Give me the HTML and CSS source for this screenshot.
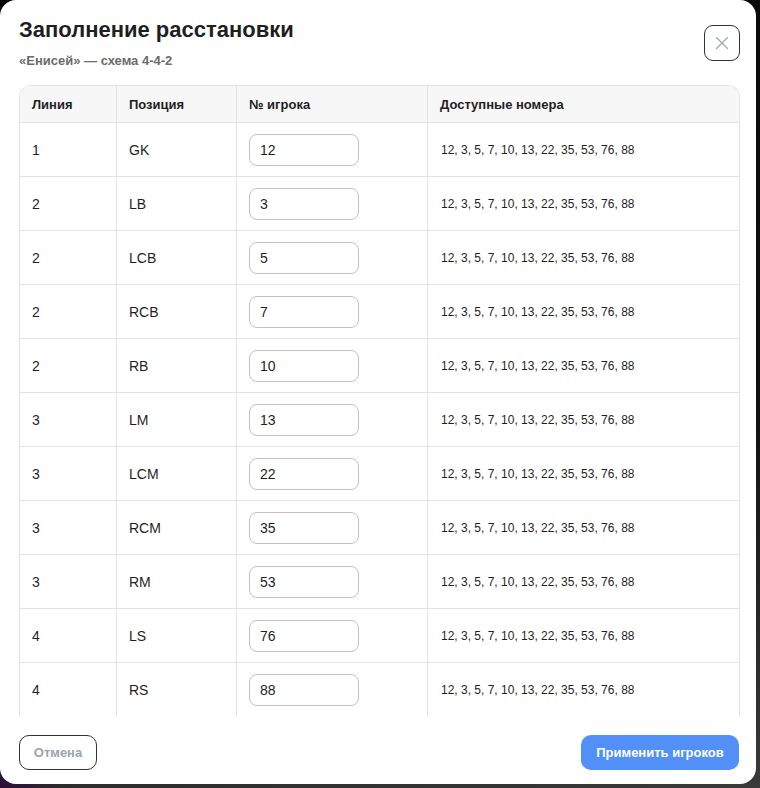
FILE: index.html
```html
<!DOCTYPE html>
<html lang="ru">
<head>
  <meta charset="UTF-8">
  <meta name="viewport" content="width=device-width, initial-scale=1.0">
  <title>Заполнение расстановки</title>
  <link rel="stylesheet" href="styles.css">
</head>
<body>

  <div class="modal">
    <header class="modal__head">
      <div>
        <h2 class="modal__title">Заполнение расстановки</h2>
        <p class="modal__sub">«Енисей» — схема 4-4-2</p>
      </div>
      <button class="modal__close" aria-label="Закрыть">
        <svg width="14" height="14" viewBox="0 0 14 14"><path d="M1.5 1.5l11 11M12.5 1.5l-11 11" stroke="#a3a9b3" stroke-width="1.4" stroke-linecap="round"/></svg>
      </button>
    </header>

    <div class="lineup">
      <table class="lineup__table">
        <thead>
          <tr>
            <th class="col-line">Линия</th>
            <th class="col-pos">Позиция</th>
            <th class="col-num">№ игрока</th>
            <th>Доступные номера</th>
          </tr>
        </thead>
        <tbody>
          <tr><td>1</td><td>GK</td><td><input type="text" value="12"></td><td class="avail">12, 3, 5, 7, 10, 13, 22, 35, 53, 76, 88</td></tr>
          <tr><td>2</td><td>LB</td><td><input type="text" value="3"></td><td class="avail">12, 3, 5, 7, 10, 13, 22, 35, 53, 76, 88</td></tr>
          <tr><td>2</td><td>LCB</td><td><input type="text" value="5"></td><td class="avail">12, 3, 5, 7, 10, 13, 22, 35, 53, 76, 88</td></tr>
          <tr><td>2</td><td>RCB</td><td><input type="text" value="7"></td><td class="avail">12, 3, 5, 7, 10, 13, 22, 35, 53, 76, 88</td></tr>
          <tr><td>2</td><td>RB</td><td><input type="text" value="10"></td><td class="avail">12, 3, 5, 7, 10, 13, 22, 35, 53, 76, 88</td></tr>
          <tr><td>3</td><td>LM</td><td><input type="text" value="13"></td><td class="avail">12, 3, 5, 7, 10, 13, 22, 35, 53, 76, 88</td></tr>
          <tr><td>3</td><td>LCM</td><td><input type="text" value="22"></td><td class="avail">12, 3, 5, 7, 10, 13, 22, 35, 53, 76, 88</td></tr>
          <tr><td>3</td><td>RCM</td><td><input type="text" value="35"></td><td class="avail">12, 3, 5, 7, 10, 13, 22, 35, 53, 76, 88</td></tr>
          <tr><td>3</td><td>RM</td><td><input type="text" value="53"></td><td class="avail">12, 3, 5, 7, 10, 13, 22, 35, 53, 76, 88</td></tr>
          <tr><td>4</td><td>LS</td><td><input type="text" value="76"></td><td class="avail">12, 3, 5, 7, 10, 13, 22, 35, 53, 76, 88</td></tr>
          <tr><td>4</td><td>RS</td><td><input type="text" value="88"></td><td class="avail">12, 3, 5, 7, 10, 13, 22, 35, 53, 76, 88</td></tr>
        </tbody>
      </table>
    </div>

    <footer class="modal__foot">
      <button class="btn btn--ghost">Отмена</button>
      <button class="btn btn--primary">Применить игроков</button>
    </footer>
  </div>

</body>
</html>
```

FILE: styles.css
```css
* {
  box-sizing: border-box;
  margin: 0;
  padding: 0;
}
:root {
  --text: #1f1f1f;
  --muted: #6b6b6b;
  --line: #e3e3e3;
  --head-bg: #f7f7f7;
  --blue: #5290f8;
}
body {
  height: 788px;
  overflow: hidden;
  font-family: "Liberation Sans", Arial, sans-serif;
  color: var(--text);
  background:
    radial-gradient(circle at 0 100%, #2c0f38 0, transparent 60px),
    linear-gradient(170deg, #080808 0%, #111 60%, #3a3a3a 100%);
}

/* Modal */

.modal {
  width: 756px;
  height: 784px;
  display: flex;
  flex-direction: column;
  padding: 17px 16px 14px 19px;
  background: #fff;
  border-radius: 16px;
}
.modal__head {
  display: flex;
  justify-content: space-between;
  align-items: flex-start;
}
.modal__title {
  font-size: 22px;
  line-height: 26px;
  font-weight: 700;
}
.modal__sub {
  margin-top: 10px;
  font-size: 13px;
  line-height: 16px;
  font-weight: 700;
  color: var(--muted);
}
.modal__close {
  width: 36px;
  height: 36px;
  margin-top: 8px;
  display: flex;
  align-items: center;
  justify-content: center;
  background: #fff;
  border: 1px solid #2f333a;
  border-radius: 9px;
}

/* Table */

.lineup {
  flex: 1;
  min-height: 0;
  margin-top: 16px;
  overflow: hidden;
  border: 1px solid var(--line);
  border-bottom: 0;
  border-radius: 12px 12px 0 0;
}
.lineup__table {
  width: 100%;
  table-layout: fixed;
  border-collapse: separate;
  border-spacing: 0;
  font-size: 14px;
}
.lineup__table th,
.lineup__table td {
  padding: 0 12px;
  text-align: left;
  vertical-align: middle;
  border-right: 1px solid var(--line);
  border-bottom: 1px solid var(--line);
}
.lineup__table th:last-child,
.lineup__table td:last-child {
  border-right: 0;
}
.lineup__table th {
  height: 37px;
  font-size: 13px;
  font-weight: 700;
  background: var(--head-bg);
}
.lineup__table td {
  height: 54px;
}
.col-line { width: 97px; }
.col-pos { width: 120px; }
.col-num { width: 191px; }

.lineup__table input {
  width: 110px;
  height: 32px;
  padding: 0 10px;
  font: 14px "Liberation Sans", Arial, sans-serif;
  color: var(--text);
  border: 1px solid #c2c2c2;
  border-radius: 8px;
  outline: none;
}
.lineup__table .avail {
  font-size: 12px;
  padding-left: 13px;
}

/* Footer */

.modal__foot {
  display: flex;
  justify-content: space-between;
  margin-top: 19px;
  margin-right: 1px;
}
.btn {
  height: 35px;
  font: 700 13px "Liberation Sans", Arial, sans-serif;
  border-radius: 10px;
}
.btn--ghost {
  width: 78px;
  color: #9ba4b1;
  background: #fff;
  border: 1px solid #2f333a;
}
.btn--primary {
  width: 158px;
  color: #fff;
  background: var(--blue);
  border: 0;
}
```
